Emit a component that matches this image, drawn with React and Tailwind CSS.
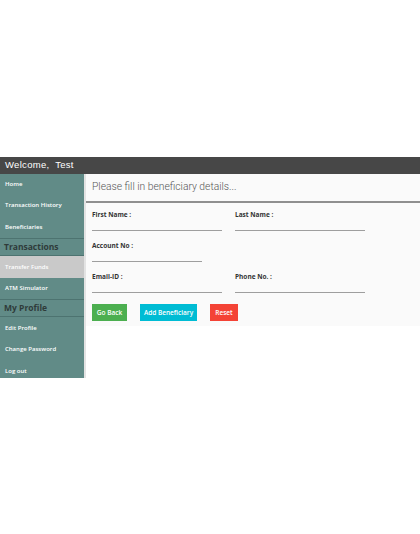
import React from 'react';

const font = { fontFamily: '"Open Sans", sans-serif' };

const SideItem = ({ children, active }) => (
  <div
    className={`h-[21.6px] shrink-0 flex items-center pl-[5px] text-[6px] font-semibold text-white ${
      active ? 'bg-[#c9c9c9]' : ''
    }`}
  >
    {children}
  </div>
);

const SideHeader = ({ children }) => (
  <div className="h-[18px] shrink-0 flex items-center pl-[4px] text-[8.5px] font-bold text-[#2f3b3a] border-y border-[#4d7370]">
    {children}
  </div>
);

const Field = ({ label, width = 'w-[130px]' }) => (
  <div className={`${width} flex flex-col`}>
    <span className="text-[6.5px] font-bold text-[#333] leading-[8px]">{label}</span>
    <div className="mt-[10.5px] border-b border-[#9e9e9e]" />
  </div>
);

const Btn = ({ children, color, width }) => (
  <button
    className={`${color} ${width} h-[17px] text-white text-[6.5px] font-semibold flex items-center justify-center`}
  >
    {children}
  </button>
);

export default function App() {
  return (
    <div className="min-h-screen flex flex-col justify-center bg-white" style={font}>
      <div className="h-[17px] bg-[#474747] flex items-center pl-[5px]">
        <span className="text-white text-[9.5px] tracking-[0.3px]" style={{ fontFamily: '"Liberation Sans", sans-serif' }}>
          Welcome,&nbsp; Test
        </span>
      </div>
      <div className="flex">
        <div className="w-[86px] bg-[#618b87] border-r-2 border-[#e3e3e3] flex flex-col h-[204px] overflow-hidden">
          <SideItem>Home</SideItem>
          <SideItem>Transaction History</SideItem>
          <SideItem>Beneficiaries</SideItem>
          <SideHeader>Transactions</SideHeader>
          <SideItem active>Transfer Funds</SideItem>
          <SideItem>ATM Simulator</SideItem>
          <SideHeader>My Profile</SideHeader>
          <SideItem>Edit Profile</SideItem>
          <SideItem>Change Password</SideItem>
          <SideItem>Log out</SideItem>
        </div>
        <div className="flex-1 self-start bg-[#fafafa] h-[152px]">
          <div className="h-[29px] flex items-center pl-[6px] border-b-2 border-[#8f8f8f]">
            <span
              className="text-[10.3px] font-light text-[#555]"
              style={{ fontFamily: 'Roboto, sans-serif' }}
            >
              Please fill in beneficiary details...
            </span>
          </div>
          <div className="pl-[6px] pt-[8.5px] flex flex-col gap-[11.5px]">
            <div className="flex gap-[13px]">
              <Field label="First Name :" />
              <Field label="Last Name :" />
            </div>
            <div className="flex">
              <Field label="Account No :" width="w-[110px]" />
            </div>
            <div className="flex gap-[13px]">
              <Field label="Email-ID :" />
              <Field label="Phone No. :" />
            </div>
          </div>
          <div className="pl-[6px] pt-[11.5px] flex gap-[13px]">
            <Btn color="bg-[#4caf50]" width="w-[35px]">Go Back</Btn>
            <Btn color="bg-[#00bcd4]" width="w-[57px]">Add Beneficiary</Btn>
            <Btn color="bg-[#f44336]" width="w-[28px]">Reset</Btn>
          </div>
        </div>
      </div>
    </div>
  );
}
